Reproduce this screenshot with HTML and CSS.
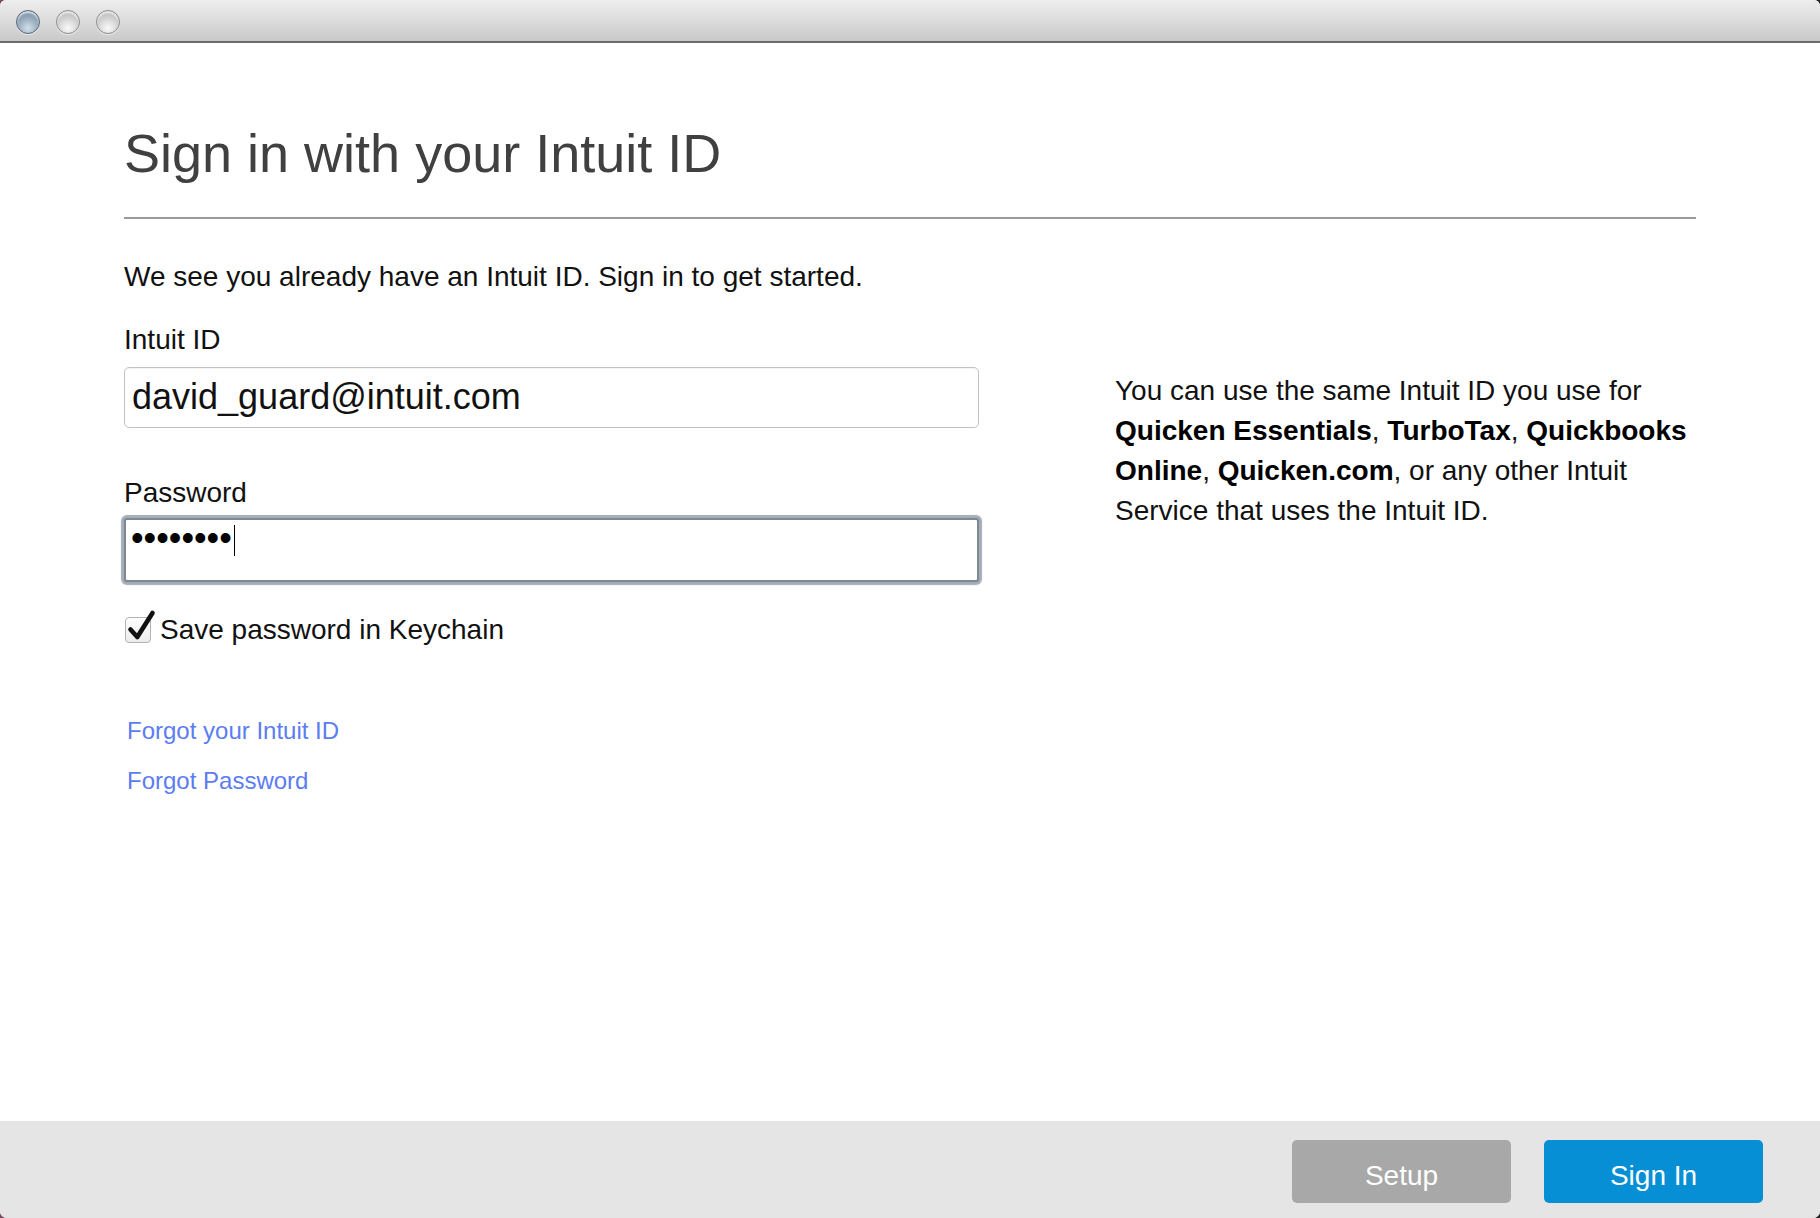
FILE: index.html
```html
<!DOCTYPE html>
<html lang="en">
<head>
<meta charset="utf-8">
<title>Sign in with your Intuit ID</title>
<link rel="stylesheet" href="styles.css">
</head>
<body>
<div class="window">
  <div class="titlebar">
    <span class="light light-active"></span>
    <span class="light"></span>
    <span class="light"></span>
  </div>
  <main class="content">
    <h1 class="title">Sign in with your Intuit ID</h1>
    <hr class="rule">
    <p class="intro">We see you already have an Intuit ID. Sign in to get started.</p>
    <div class="columns">
      <form class="form">
        <label class="label">Intuit ID</label>
        <div class="field">david_guard@intuit.com</div>
        <label class="label label-pw">Password</label>
        <div class="field field-focus"><span class="dots">••••••••</span><span class="caret"></span></div>
        <div class="check-row">
          <span class="checkbox">
            <svg class="checkmark" viewBox="0 0 32 34" width="32" height="34"><path d="M5.5 20.5 L12.3 28 L27.5 4" fill="none" stroke="#111" stroke-width="4.6" stroke-linecap="round" stroke-linejoin="round"/></svg>
          </span>
          <span class="check-label">Save password in Keychain</span>
        </div>
        <a class="link link-first" href="#">Forgot your Intuit ID</a>
        <a class="link" href="#">Forgot Password</a>
      </form>
      <p class="info">You can use the same Intuit ID you use for <b>Quicken Essentials</b>, <b>TurboTax</b>, <b>Quickbooks Online</b>, <b>Quicken.com</b>, or any other Intuit Service that uses the Intuit ID.</p>
    </div>
  </main>
  <footer class="footer">
    <button class="btn btn-setup" type="button">Setup</button>
    <button class="btn btn-primary" type="button">Sign In</button>
  </footer>
</div>
</body>
</html>
```
FILE: styles.css
```css
* { box-sizing: border-box; }
html, body { margin: 0; padding: 0; }
body {
  width: 1820px;
  height: 1218px;
  overflow: hidden;
  background: linear-gradient(to right, #7b4d60 0, #3a2c33 40px, #222 100%);
  font-family: "Liberation Sans", Arial, Helvetica, sans-serif;
  color: #111;
}
.window {
  width: 1820px;
  height: 1218px;
  display: flex;
  flex-direction: column;
  background: #fff;
  border-radius: 6px 6px 7px 7px;
  overflow: hidden;
}
.titlebar {
  height: 43px;
  flex: none;
  display: flex;
  align-items: flex-start;
  gap: 16px;
  padding: 10px 16px 0;
  background: linear-gradient(to bottom, #eeeeee 0%, #dcdcdc 50%, #c9c9c9 100%);
  border-bottom: 2px solid #6c6c6c;
}
.light {
  width: 24px;
  height: 24px;
  border-radius: 50%;
  border: 1px solid #8d8d8d;
  background: radial-gradient(circle at 50% 78%, #fbfbfb 0%, #d6d6d6 45%, #a9a9a9 100%);
  box-shadow: inset 0 2px 2px rgba(255,255,255,0.8), 0 1px 0 rgba(255,255,255,0.6);
}
.light-active {
  border-color: #55687a;
  background: radial-gradient(circle at 50% 78%, #d4e0ea 0%, #9cb0c1 45%, #637a8e 100%);
}
.content {
  flex: 1;
  padding: 78px 124px 0;
}
.title {
  margin: 0;
  font-size: 54px;
  line-height: 64px;
  font-weight: normal;
  color: #404040;
}
.rule {
  margin: 32px 0 0;
  height: 0;
  border: 0;
  border-top: 2px solid #9a9a9a;
}
.intro {
  margin: 41px 0 0;
  font-size: 28px;
  line-height: 34px;
}
.columns {
  margin-top: 29px;
  display: flex;
  align-items: flex-start;
  gap: 136px;
}
.form {
  width: 855px;
  flex: none;
  display: flex;
  flex-direction: column;
  align-items: flex-start;
}
.label {
  font-size: 28px;
  line-height: 34px;
}
.label-pw { margin-top: 48px; }
.field {
  width: 855px;
  height: 61px;
  margin-top: 10px;
  padding: 0 7px;
  border: 1px solid #c2c2c2;
  border-radius: 5px;
  box-shadow: inset 0 1px 1px rgba(0,0,0,0.05);
  font-size: 36px;
  line-height: 57px;
  color: #111;
  background: #fff;
}
.field-focus {
  height: 64px;
  margin-top: 8px;
  padding: 0 5px;
  border: 2px solid #7d8893;
  border-radius: 3px;
  box-shadow: 0 0 1px 3px #a4adb6;
  line-height: 36px;
}
.dots { color: #000; }
.caret {
  display: inline-block;
  width: 1.5px;
  height: 31px;
  margin-left: 2px;
  background: #000;
  vertical-align: -6px;
}
.check-row {
  margin-top: 31px;
  display: flex;
  align-items: center;
  gap: 9px;
  padding-left: 1px;
}
.checkbox {
  position: relative;
  width: 26px;
  height: 26px;
  border: 1px solid #b3b3b3;
  border-radius: 4px;
  background: linear-gradient(to bottom, #fefefe, #ececec);
}
.checkmark {
  position: absolute;
  left: -1px;
  top: -9px;
}
.check-label {
  font-size: 28px;
  line-height: 34px;
}
.link {
  margin-left: 3px;
  font-size: 24px;
  line-height: 30px;
  color: #5c7cf3;
  text-decoration: none;
}
.link-first { margin-top: 69px; margin-bottom: 20px; }
.info {
  margin: 48px 0 0;
  width: 585px;
  font-size: 28px;
  line-height: 40px;
  color: #111;
}
.info b { font-weight: bold; color: #000; }
.footer {
  flex: none;
  height: 97px;
  display: flex;
  justify-content: flex-end;
  align-items: flex-start;
  gap: 33px;
  padding: 19px 57px 0 0;
  background: #e5e5e5;
}
.btn {
  width: 219px;
  height: 63px;
  border: 0;
  border-radius: 5px;
  padding: 8px 0 0;
  font-family: "Liberation Sans", Arial, Helvetica, sans-serif;
  font-size: 28px;
  line-height: 34px;
  color: #fff;
  display: flex;
  align-items: center;
  justify-content: center;
}
.btn-setup { background: #a8a8a8; }
.btn-primary { background: #078fd5; }
```
